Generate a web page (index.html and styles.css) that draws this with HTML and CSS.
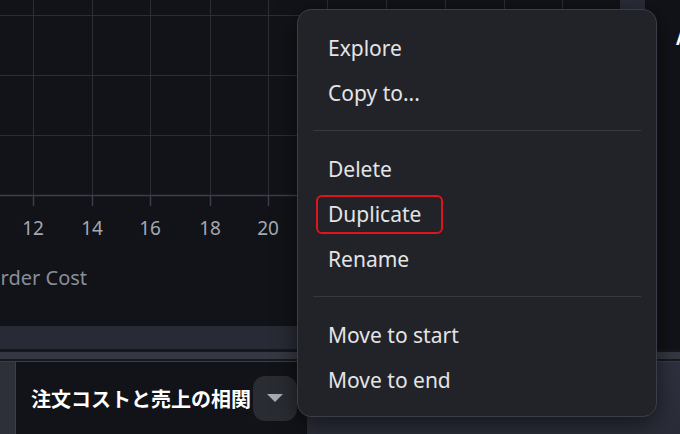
FILE: index.html
```html
<!DOCTYPE html>
<html lang="ja">
<head>
    <meta charset="UTF-8">
    <meta name="viewport" content="width=device-width, initial-scale=1.0">
    <link rel="stylesheet" href="styles.css">
    <title>注文コストと売上の相関</title>
</head>
<body>
    <div class="workspace">
        <div class="top">
            <section class="chart-panel">
                <div class="plot">
                    <svg class="chart" width="620" height="326" viewBox="0 0 620 326">
                        <g class="grid">
                            <line x1="0" y1="15.5" x2="620" y2="15.5"/>
                            <line x1="0" y1="75.5" x2="620" y2="75.5"/>
                            <line x1="0" y1="135.5" x2="620" y2="135.5"/>
                            <line x1="33.5" y1="0" x2="33.5" y2="195"/>
                            <line x1="92.5" y1="0" x2="92.5" y2="195"/>
                            <line x1="150.5" y1="0" x2="150.5" y2="195"/>
                            <line x1="210.5" y1="0" x2="210.5" y2="195"/>
                            <line x1="268.5" y1="0" x2="268.5" y2="195"/>
                            <line x1="327.5" y1="0" x2="327.5" y2="195"/>
                            <line x1="386.5" y1="0" x2="386.5" y2="195"/>
                            <line x1="445.5" y1="0" x2="445.5" y2="195"/>
                            <line x1="504.5" y1="0" x2="504.5" y2="195"/>
                            <line x1="562.5" y1="0" x2="562.5" y2="195"/>
                        </g>
                        <g class="axis">
                            <line x1="0" y1="195.5" x2="620" y2="195.5"/>
                            <line x1="33.5" y1="195" x2="33.5" y2="206"/>
                            <line x1="92.5" y1="195" x2="92.5" y2="206"/>
                            <line x1="150.5" y1="195" x2="150.5" y2="206"/>
                            <line x1="210.5" y1="195" x2="210.5" y2="206"/>
                            <line x1="268.5" y1="195" x2="268.5" y2="206"/>
                            <line x1="327.5" y1="195" x2="327.5" y2="206"/>
                            <line x1="386.5" y1="195" x2="386.5" y2="206"/>
                            <line x1="445.5" y1="195" x2="445.5" y2="206"/>
                            <line x1="504.5" y1="195" x2="504.5" y2="206"/>
                            <line x1="562.5" y1="195" x2="562.5" y2="206"/>
                        </g>
                        <g class="tick-labels">
                            <text x="33" y="235">12</text>
                            <text x="92" y="235">14</text>
                            <text x="150" y="235">16</text>
                            <text x="210" y="235">18</text>
                            <text x="268" y="235">20</text>
                        </g>
                        <text class="axis-title" x="-15" y="285">Order Cost</text>
                    </svg>
                </div>
                <div class="vscroll"><div class="vthumb"></div></div>
                <div class="hscroll"></div>
            </section>
            <aside class="side-panel">
                <h2 class="side-title">AI</h2>
            </aside>
        </div>

        <div class="bottom">
            <div class="tab-strip"></div>
            <div class="bottom-body">
                <div class="side-strip"></div>
                <div class="title-panel">
                    <h1 class="chart-title">注文コストと売上の相関</h1>
                    <button class="dropdown" aria-label="menu">
                        <svg width="16" height="8" viewBox="0 0 16 8"><path d="M0 0h16l-8 8z"/></svg>
                    </button>
                </div>
                <div class="rest"></div>
            </div>
        </div>
    </div>

    <ul class="context-menu">
        <li class="menu-item">Explore</li>
        <li class="menu-item">Copy to...</li>
        <li class="separator"></li>
        <li class="menu-item">Delete</li>
        <li class="menu-item marked">Duplicate</li>
        <li class="menu-item">Rename</li>
        <li class="separator"></li>
        <li class="menu-item">Move to start</li>
        <li class="menu-item">Move to end</li>
    </ul>
</body>
</html>
```

FILE: styles.css
```css
body {
    margin: 0;
    width: 680px;
    height: 434px;
    overflow: hidden;
    background-color: #111318;
    font-family: 'Noto Sans', 'Noto Sans CJK JP', sans-serif;
    color: #e6e6e8;
}

.workspace {
    display: flex;
    flex-direction: column;
    height: 434px;
}

.top {
    display: flex;
    height: 349px;
}

.chart-panel {
    display: grid;
    grid-template-columns: 620px 25px;
    grid-template-rows: 326px 23px;
    width: 645px;
    flex-shrink: 0;
}

.plot {
    overflow: hidden;
    background-color: #111318;
}

.chart {
    display: block;
    overflow: hidden;
}

.grid line {
    stroke: #2b2e38;
    stroke-width: 1;
}

.axis line {
    stroke: #3b3f4a;
    stroke-width: 1.5;
}

.tick-labels text {
    font-family: 'Noto Sans', sans-serif;
    font-size: 19px;
    fill: #a4a8b1;
    text-anchor: middle;
}

.axis-title {
    font-family: 'Noto Sans', sans-serif;
    font-size: 20px;
    fill: #8a8e98;
}

.vscroll {
    background-color: #121418;
}

.vthumb {
    height: 60px;
    background-color: #2a2d38;
}

.hscroll {
    grid-column: 1 / 3;
    background-color: #282b35;
}

.side-panel {
    flex: 1;
    background-color: #111318;
    padding: 27px 0 0 31px;
}

.side-title {
    margin: 0;
    font-size: 17px;
    font-weight: 700;
    color: #ffffff;
    white-space: nowrap;
}

.bottom {
    flex: 1;
    display: flex;
    flex-direction: column;
}

.tab-strip {
    height: 7px;
    background-color: #353842;
    border-top: 3px solid #15171c;
    border-bottom: 2px solid #17191e;
}

.bottom-body {
    flex: 1;
    display: flex;
    border-top: 1px solid #3a3d47;
}

.side-strip {
    width: 15px;
    background-color: #2d3039;
    border-right: 1px solid #3d404a;
}

.title-panel {
    width: 276px;
    display: flex;
    align-items: center;
    gap: 2px;
    padding: 0 0 0 15px;
    background-color: #111318;
}

.chart-title {
    margin: 0;
    font-family: 'Noto Sans CJK JP', sans-serif;
    font-size: 20px;
    font-weight: 700;
    color: #ffffff;
    white-space: nowrap;
}

.dropdown {
    width: 44px;
    height: 45px;
    flex-shrink: 0;
    display: flex;
    align-items: center;
    justify-content: center;
    border: none;
    border-radius: 12px;
    background-color: #2a2c33;
    padding: 0;
}

.dropdown path {
    fill: #a9acb4;
}

.rest {
    flex: 1;
    background: linear-gradient(180deg, #2f3140, #2a2c37);
}

.context-menu {
    position: absolute;
    left: 297px;
    top: 9px;
    width: 358px;
    margin: 0;
    padding: 16px 0 13px;
    list-style: none;
    background-color: #212328;
    border: 1px solid #3b3e48;
    border-radius: 14px;
    box-shadow: 0 6px 24px rgba(0, 0, 0, 0.55);
}

.menu-item {
    position: relative;
    height: 45px;
    line-height: 45px;
    padding-left: 30px;
    font-size: 21px;
    color: #e4e4e6;
    white-space: nowrap;
}

.menu-item.marked::after {
    content: "";
    position: absolute;
    left: 18px;
    top: 3px;
    width: 123px;
    height: 35px;
    border: 2px solid #e0141b;
    border-radius: 6px;
}

.separator {
    height: 1px;
    margin: 14px 15px 16px;
    background-color: #363944;
}
```
